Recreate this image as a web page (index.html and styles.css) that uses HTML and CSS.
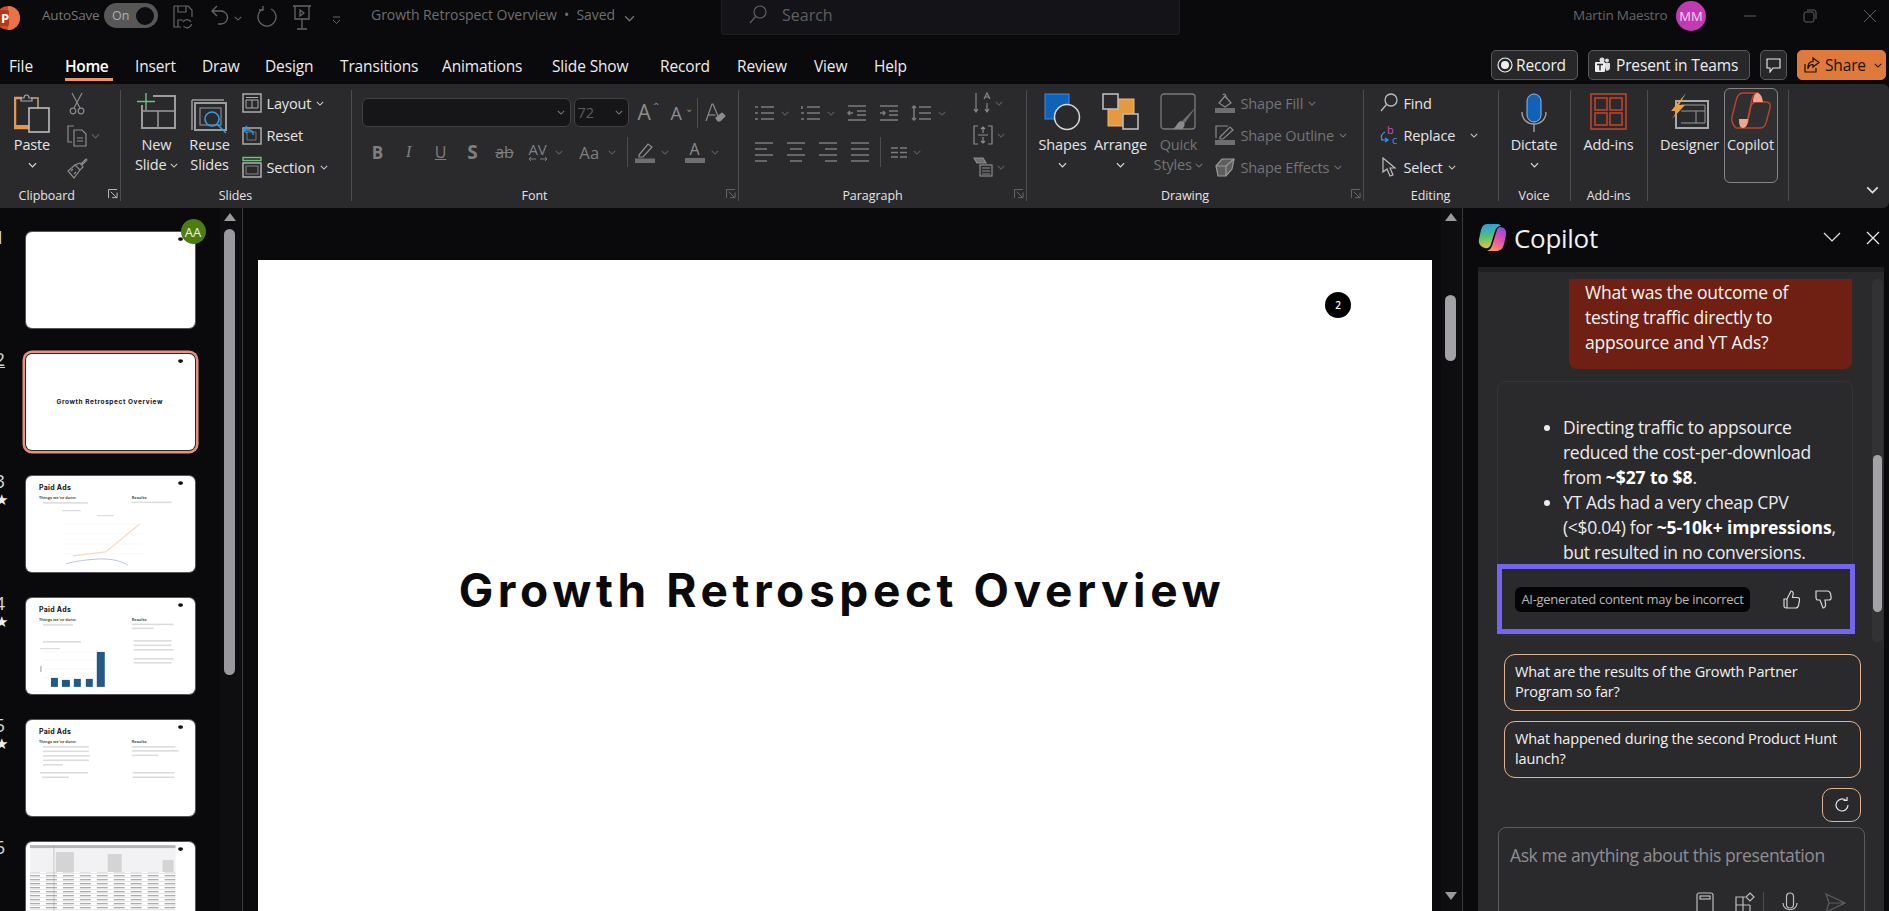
FILE: index.html
```html
<!DOCTYPE html>
<html lang="en">
<head>
<meta charset="utf-8">
<title>Growth Retrospect Overview</title>
<link rel="stylesheet" href="styles.css">
</head>
<body>
<svg class="sprite" aria-hidden="true">
  <symbol id="chev" viewBox="0 0 10 6"><path d="M1 1l4 4 4-4" fill="none" stroke="currentColor" stroke-width="1.3"/></symbol>
  <symbol id="launch" viewBox="0 0 11 11"><path d="M.5 10V.5H10M3 3l6.5 6.5M4.5 9.5h5.500v-5.500" fill="none" stroke="currentColor"/></symbol>
</svg>

<header class="titlebar">
  <svg class="logo-p" width="21" height="30" viewBox="0 0 21 30"><circle cx="8" cy="16" r="12" fill="#d0502a"/><path d="M8 4a12 12 0 0 1 0 24z" fill="#e8734a"/><rect x="-3" y="8" width="12" height="16" rx="1.500" fill="#b7391a"/><text x="1" y="21" class="logo-p-text">P</text></svg>
  <span class="autosave">AutoSave</span>
  <span class="toggle"><span class="toggle-on">On</span><span class="toggle-knob"></span></span>
  <svg class="qat q-save" width="20" height="26" viewBox="0 0 20 26" fill="none" stroke="#666" stroke-width="1.200"><path d="M1 1h14l4 4v7M1 1v21h7M5 1v6h8V1M5 22v-7h5"/><path d="M10 17a4.500 4.500 0 0 1 8 0M18.500 19a4.500 4.500 0 0 1-8 2"/></svg>
  <svg class="qat q-undo" width="19" height="26" viewBox="0 0 19 26" fill="none" stroke="#666" stroke-width="1.300"><path d="M7 2L2 7l5 5M2 7h9a6.500 6.500 0 0 1 0 13H8"/></svg>
  <svg class="qat q-chev" width="8" height="5"><use href="#chev"/></svg>
  <svg class="qat q-redo" width="20" height="26" viewBox="0 0 20 26" fill="none" stroke="#666" stroke-width="1.300"><path d="M6 4a9 9 0 1 0 8 0M6 1v4H2"/></svg>
  <svg class="qat q-present" width="20" height="26" viewBox="0 0 20 26" fill="none" stroke="#666" stroke-width="1.300"><path d="M1 1h18M3 1v13h14V1M10 14v9M5 24h10"/><path d="M8 5l4 3-4 3z"/></svg>
  <svg class="qat q-more" width="9" height="9" viewBox="0 0 9 9" fill="none" stroke="#666"><path d="M1 1h7M1 4l3.500 3.500L8 4"/></svg>
  <span class="doc-title">Growth Retrospect Overview &nbsp;•&nbsp; Saved</span>
  <svg class="doc-chev" width="11" height="7"><use href="#chev"/></svg>
  <div class="search">
    <svg width="18" height="20" viewBox="0 0 18 20" fill="none" stroke="#5f5f5f" stroke-width="1.200"><circle cx="11" cy="7" r="6"/><path d="M6.500 11.500L1 18"/></svg>
    <span>Search</span>
  </div>
  <span class="user-name">Martin Maestro</span>
  <span class="avatar">MM</span>
  <div class="win-controls">
    <svg width="14" height="14" viewBox="0 0 14 14" stroke="#5e5e5e" fill="none"><path d="M1 7h12"/></svg>
    <svg width="14" height="14" viewBox="0 0 14 14" stroke="#5e5e5e" fill="none"><rect x="1" y="3" width="10" height="10" rx="2"/><path d="M4 1h7a2 2 0 0 1 2 2v7"/></svg>
    <svg width="14" height="14" viewBox="0 0 14 14" stroke="#5e5e5e" fill="none"><path d="M1 1l12 12M13 1L1 13"/></svg>
  </div>
</header>

<nav class="tabbar">
  <span class="tab t-file">File</span>
  <span class="tab tab-active t-home">Home</span>
  <span class="tab t-insert">Insert</span>
  <span class="tab t-draw">Draw</span>
  <span class="tab t-design">Design</span>
  <span class="tab t-trans">Transitions</span>
  <span class="tab t-anim">Animations</span>
  <span class="tab t-show">Slide Show</span>
  <span class="tab t-record">Record</span>
  <span class="tab t-review">Review</span>
  <span class="tab t-view">View</span>
  <span class="tab t-help">Help</span>
  <div class="tab-actions">
    <button class="act act-record"><svg width="16" height="16" viewBox="0 0 16 16"><circle cx="8" cy="8" r="7" fill="none" stroke="#eee" stroke-width="1.200"/><circle cx="8" cy="8" r="4" fill="#eee"/></svg>Record</button>
    <button class="act act-teams"><svg width="17" height="17" viewBox="0 0 17 17" fill="#ddd"><circle cx="13" cy="3.500" r="2"/><circle cx="8" cy="3" r="2.500"/><path d="M10 6h6v5a3 3 0 0 1-4 2.500z"/><rect x="1" y="5" width="10" height="10" rx="1" fill="#eee"/><path d="M3 7.500h6M6 7.500v6" stroke="#2a2a2d" stroke-width="1.400"/></svg>Present in Teams</button>
    <button class="act act-comment"><svg width="15" height="15" viewBox="0 0 15 15" fill="none" stroke="#eee" stroke-width="1.100"><path d="M1 1h13v9H7l-3 4v-4H1z"/></svg></button>
    <button class="act act-share"><svg width="16" height="16" viewBox="0 0 16 16" fill="none" stroke="#1c1208" stroke-width="1.200"><path d="M1 7v8h11v-4M9 1l6 4.500L9 10V7.500C6 7.500 4.500 9 4 12c-.5-5 1.500-7.500 5-7.500z"/></svg>Share<svg class="share-chev" width="8" height="5"><use href="#chev"/></svg></button>
  </div>
</nav>

<section class="ribbon">
  <div class="group g-clip">
    <div class="group-body">
      <div class="big w-paste">
        <div class="big-icon"><svg width="36" height="40" viewBox="0 0 36 40" fill="none"><path d="M8 5H1v30h18" stroke="#e09a55" stroke-width="2.500"/><path d="M17 5h7v10" stroke="#c9a27e" stroke-width="1.500"/><path d="M7 8V5h3c0-4 5-4 5 0h3v3z" stroke="#aaa" stroke-width="1.200"/><rect x="2" y="32" width="17" height="3" fill="#e8954a"/><rect x="15" y="15" width="20" height="24" fill="#2a2a2d" stroke="#bdbdbd" stroke-width="1.600"/></svg></div>
        <div class="big-text">Paste</div>
        <svg class="ch-row" width="9" height="6"><use href="#chev"/></svg>
      </div>
      <div class="stack clip-tools">
        <div class="srow"><svg width="16" height="24" viewBox="0 0 16 24" fill="none" stroke="#8d8d8d" stroke-width="1.200"><path d="M3 1l8 15M13 1L5 16"/><circle cx="4" cy="19" r="2.800"/><circle cx="12" cy="19" r="2.800"/></svg></div>
        <div class="srow"><svg width="20" height="22" viewBox="0 0 20 22" fill="none" stroke="#8d8d8d" stroke-width="1.200"><path d="M7 1H1v16h4M7 5h8l4 4v12H7zM10 13h6M10 16h6"/></svg><svg class="dim-ch" width="9" height="6"><use href="#chev"/></svg></div>
        <div class="srow"><svg width="21" height="22" viewBox="0 0 21 22" fill="none" stroke="#8d8d8d" stroke-width="1.200"><path d="M14 7l5-5 1 1-5 5zM13 6l3 4-3 3-5-5zM8 8l-7 6 6 7 6-8"/><path d="M4 14l2-2M7 17l2-2"/></svg></div>
      </div>
    </div>
    <div class="group-label">Clipboard<svg class="launcher lit" width="10" height="10"><use href="#launch"/></svg></div>
  </div>

  <div class="group g-slides">
    <div class="group-body">
      <div class="big w-new">
        <div class="big-icon"><svg width="40" height="36" viewBox="0 0 40 36" fill="none"><path d="M5 12v23h33V3H16" stroke="#9c9c9c" stroke-width="2"/><path d="M5 18h33M21 18v17" stroke="#9c9c9c" stroke-width="1.500"/><path d="M9 0v17M0 8.500h18" stroke="#6cc279" stroke-width="1.400"/></svg></div>
        <div class="big-text">New<br>Slide <svg class="ch-in" width="8" height="5"><use href="#chev"/></svg></div>
      </div>
      <div class="big w-reuse">
        <div class="big-icon"><svg class="ic-low" width="40" height="38" viewBox="0 0 40 38" fill="none"><path d="M2 2h32M2 2v30" stroke="#9c9c9c" stroke-width="1.500"/><path d="M5 5h31v27H5z" stroke="#9c9c9c" stroke-width="2"/><rect x="10" y="10" width="21" height="17" stroke="#8a8a8a" stroke-width="1.200"/><circle cx="22" cy="21" r="7" stroke="#2f9be8" stroke-width="1.600"/><path d="M27 26l9 9" stroke="#2f9be8" stroke-width="1.600"/></svg></div>
        <div class="big-text">Reuse<br>Slides</div>
      </div>
      <div class="stack">
        <div class="srow"><svg class="sicon" width="20" height="20" viewBox="0 0 20 20" fill="none" stroke="#aaa"><rect x="1" y="1" width="18" height="18" stroke-width="1.500"/><path d="M4 4.500h12M4 7h12v8H4zM10 7v8"/></svg><span>Layout</span><svg class="ch-in" width="8" height="5"><use href="#chev"/></svg></div>
        <div class="srow"><svg class="sicon" width="20" height="20" viewBox="0 0 20 20" fill="none"><rect x="1" y="3" width="18" height="16" stroke="#aaa" stroke-width="1.500"/><path d="M5 7h9v8H5z" stroke="#777"/><path d="M5 1L1 5l4 3M1 5h6a4 4 0 0 1 4 5" stroke="#2f9be8" stroke-width="1.300"/></svg><span>Reset</span></div>
        <div class="srow"><svg class="sicon" width="20" height="22" viewBox="0 0 20 22" fill="none"><path d="M1 1.500h18v3H1z" stroke="#6cc279" stroke-width="1.400"/><rect x="1" y="7" width="18" height="14" stroke="#aaa" stroke-width="1.600"/><rect x="4" y="10" width="12" height="8" stroke="#888"/></svg><span>Section</span><svg class="ch-in" width="8" height="5"><use href="#chev"/></svg></div>
      </div>
    </div>
    <div class="group-label">Slides</div>
  </div>

  <div class="group g-font">
    <div class="group-body font-body">
      <div class="font-row">
        <div class="combo c-name"><svg width="8" height="5"><use href="#chev"/></svg></div>
        <div class="combo c-size"><span>72</span><svg width="8" height="5"><use href="#chev"/></svg></div>
        <span class="glyph g-grow">A<sup>⌃</sup></span>
        <span class="glyph g-shrink">A<sup>⌄</sup></span>
        <i class="vsep vs-clear"></i>
        <svg class="i-clear" width="21" height="20" viewBox="0 0 21 20" fill="none" stroke="#8d8d8d" stroke-width="1.200"><path d="M1 18L7 1h1l5 12"/><path d="M3.500 12h7"/><path d="M11 15l6-5 3 3-5 5h-2z" fill="#8d8d8d"/></svg>
      </div>
      <div class="font-row row-fmt">
        <b class="fmt f-b">B</b><i class="fmt f-i">I</i><u class="fmt f-u">U</u><b class="fmt f-s">S</b><s class="fmt f-ab">ab</s>
        <span class="fmt f-av">AV<svg width="20" height="6" viewBox="0 0 20 6" fill="none" stroke="#7a7a7a"><path d="M1 3h7M3 1L1 3l2 2M12 3h7M17 1l2 2-2 2"/></svg></span>
        <svg class="fch" width="8" height="5"><use href="#chev"/></svg>
        <span class="fmt f-aa">Aa</span>
        <svg class="fch" width="8" height="5"><use href="#chev"/></svg>
        <i class="vsep vs-fmt"></i>
        <svg class="i-hl" width="20" height="21" viewBox="0 0 20 21" fill="none" stroke="#8d8d8d" stroke-width="1.200"><path d="M4 13l9-11 4 3-9 10H4z"/><rect y="16.500" width="20" height="4.500" fill="#6f6f6f" stroke="none"/></svg>
        <svg class="fch" width="8" height="5"><use href="#chev"/></svg>
        <span class="i-fc"><span>A</span></span>
        <svg class="fch" width="8" height="5"><use href="#chev"/></svg>
      </div>
    </div>
    <div class="group-label">Font<svg class="launcher" width="10" height="10"><use href="#launch"/></svg></div>
  </div>

  <div class="group g-para">
    <div class="group-body para-body">
      <div class="para-left">
        <div class="para-row">
          <svg class="pi" width="19" height="16" viewBox="0 0 19 16" stroke="#7c7c7c" stroke-width="1.600"><path d="M0 2h3M0 8h3M0 14h3M6 2h13M6 8h13M6 14h13"/></svg>
          <svg class="pch" width="8" height="5"><use href="#chev"/></svg>
          <svg class="pi" width="19" height="16" viewBox="0 0 19 16" stroke="#7c7c7c" stroke-width="1.600"><path d="M1 1v3M0 8h3M0 14h3M6 2h13M6 8h13M6 14h13"/></svg>
          <svg class="pch" width="8" height="5"><use href="#chev"/></svg>
          <svg class="pi pi-a" width="19" height="16" viewBox="0 0 19 16" fill="none" stroke="#7c7c7c" stroke-width="1.500"><path d="M1 1h18M10 6h9M10 10h9M1 15h18M6 8H1M3 6L1 8l2 2"/></svg>
          <svg class="pi pi-b" width="19" height="16" viewBox="0 0 19 16" fill="none" stroke="#7c7c7c" stroke-width="1.500"><path d="M1 1h18M10 6h9M10 10h9M1 15h18M1 8h5M4 6l2 2-2 2"/></svg>
          <svg class="pi pi-b" width="20" height="16" viewBox="0 0 20 16" fill="none" stroke="#7c7c7c" stroke-width="1.500"><path d="M8 2h12M8 8h12M8 14h12M3 1v14M1 3l2-2 2 2M1 13l2 2 2-2"/></svg>
          <svg class="pch" width="8" height="5"><use href="#chev"/></svg>
        </div>
        <div class="para-row para-row2">
          <svg class="pa" width="18" height="22" viewBox="0 0 18 22" stroke="#7c7c7c" stroke-width="1.600"><path d="M0 2h18M0 8h12M0 14h18M0 20h12"/></svg>
          <svg class="pa" width="18" height="22" viewBox="0 0 18 22" stroke="#7c7c7c" stroke-width="1.600"><path d="M0 2h18M3 8h12M0 14h18M3 20h12"/></svg>
          <svg class="pa" width="18" height="22" viewBox="0 0 18 22" stroke="#7c7c7c" stroke-width="1.600"><path d="M0 2h18M6 8h12M0 14h18M6 20h12"/></svg>
          <svg class="pa" width="18" height="22" viewBox="0 0 18 22" stroke="#7c7c7c" stroke-width="1.600"><path d="M0 2h18M0 8h18M0 14h18M0 20h18"/></svg>
          <i class="vsep vs-col"></i>
          <svg width="16" height="11" viewBox="0 0 16 11" stroke="#7c7c7c" stroke-width="1.300"><path d="M0 1h7M9 1h7M0 5.500h7M9 5.500h7M0 10h7M9 10h7"/></svg>
          <svg class="pch" width="8" height="5"><use href="#chev"/></svg>
        </div>
      </div>
      <div class="stack para-right">
        <div class="srow"><svg width="18" height="22" viewBox="0 0 18 22" fill="none" stroke="#8d8d8d" stroke-width="1.100"><path d="M3 1v19M1 17l2 3 2-3M11 7l3-6 3 6M12 5h4M14 11v9M12 17l2 3 2-3"/></svg><svg class="pch" width="8" height="5"><use href="#chev"/></svg></div>
        <div class="srow"><svg width="20" height="20" viewBox="0 0 20 20" fill="none" stroke="#8d8d8d" stroke-width="1.200"><path d="M5 1H1v18h4M15 1h4v18h-4M10 2v6M8 4l2-2 2 2M10 12v6M8 16l2 2 2-2M5 10h10"/></svg><svg class="pch" width="8" height="5"><use href="#chev"/></svg></div>
        <div class="srow"><svg width="20" height="20" viewBox="0 0 20 20" fill="none" stroke="#8d8d8d" stroke-width="1.200"><path d="M1 1h9l3 5H4z" fill="#6f6f6f"/><rect x="7" y="8" width="12" height="11"/><path d="M9 11h8M9 14h8M9 17h8"/></svg><svg class="pch" width="8" height="5"><use href="#chev"/></svg></div>
      </div>
    </div>
    <div class="group-label">Paragraph<svg class="launcher" width="10" height="10"><use href="#launch"/></svg></div>
  </div>

  <div class="group g-draw">
    <div class="group-body">
      <div class="big w-shapes">
        <div class="big-icon"><svg width="37" height="38" viewBox="0 0 37 38" fill="none"><rect x="1" y="1" width="24" height="25" fill="#0f62b8" stroke="#3d8be0"/><circle cx="23" cy="24" r="12.500" fill="#2a2a2d" stroke="#d8d8d8" stroke-width="1.500"/></svg></div>
        <div class="big-text">Shapes</div>
        <svg class="ch-row" width="9" height="6"><use href="#chev"/></svg>
      </div>
      <div class="big w-arrange">
        <div class="big-icon"><svg width="37" height="38" viewBox="0 0 37 38" fill="none"><rect x="6" y="6" width="26" height="27" fill="#e59a3f" stroke="#f0b878"/><rect x="1" y="1" width="15" height="15" fill="#2a2a2d" stroke="#bbb" stroke-width="1.600"/><rect x="21" y="21" width="15" height="15" fill="#2a2a2d" stroke="#bbb" stroke-width="1.600"/></svg></div>
        <div class="big-text">Arrange</div>
        <svg class="ch-row" width="9" height="6"><use href="#chev"/></svg>
      </div>
      <div class="big w-quick dim">
        <div class="big-icon"><svg width="38" height="38" viewBox="0 0 38 38" fill="none"><rect x="1" y="1" width="34" height="35" rx="3" stroke="#7a7a7a" stroke-width="1.300"/><path d="M36 14L25 30l-3-2z" fill="#6e6e6e"/><path d="M21 28c-4 1-4 5-8 8h9c3-2 3-5 2-7z" fill="#8a8a8a"/></svg></div>
        <div class="big-text">Quick<br>Styles <svg class="ch-in" width="8" height="5"><use href="#chev"/></svg></div>
      </div>
      <div class="stack dim shape-opts">
        <div class="srow"><svg class="sicon" width="20" height="20" viewBox="0 0 20 20" fill="none" stroke="#8a8a8a" stroke-width="1.200"><path d="M4 10l6-7 6 7-6 4z"/><path d="M8 2c1-2 3-1 3 3"/><rect y="15" width="20" height="5" fill="#6f6f6f" stroke="none"/></svg><span>Shape Fill</span><svg class="ch-in" width="8" height="5"><use href="#chev"/></svg></div>
        <div class="srow"><svg class="sicon" width="20" height="20" viewBox="0 0 20 20" fill="none" stroke="#8a8a8a" stroke-width="1.200"><path d="M1 13V1h12M5 12L15 2l3 3L8 14H5z"/><rect y="15" width="20" height="5" fill="#6f6f6f" stroke="none"/></svg><span>Shape Outline</span><svg class="ch-in" width="8" height="5"><use href="#chev"/></svg></div>
        <div class="srow"><svg class="sicon" width="20" height="20" viewBox="0 0 20 20" fill="#5e5e5e" stroke="#9a9a9a" stroke-width="1.200"><path d="M1 9l6-7h12l-2 10-6 7H3z"/><path d="M1 9h10l8-7M11 9v10" fill="none"/></svg><span>Shape Effects</span><svg class="ch-in" width="8" height="5"><use href="#chev"/></svg></div>
      </div>
    </div>
    <div class="group-label">Drawing<svg class="launcher" width="10" height="10"><use href="#launch"/></svg></div>
  </div>

  <div class="group g-edit">
    <div class="group-body">
      <div class="stack edit-stack">
        <div class="srow"><svg class="sicon" width="18" height="20" viewBox="0 0 18 20" fill="none" stroke="#bdbdbd" stroke-width="1.300"><circle cx="11" cy="7" r="6"/><path d="M6.500 11.500L1 18"/></svg><span>Find</span></div>
        <div class="srow"><svg class="sicon" width="18" height="20" viewBox="0 0 18 20"><text x="7" y="9" class="rep-b">b</text><text x="12" y="19" class="rep-c">c</text><path d="M5 7C1 9 0 13 3 15M8 15H1M5 13l3 2-3 2" fill="none" stroke="#2f9be8" stroke-width="1.200"/></svg><span>Replace</span><svg class="ch-rep" width="8" height="5"><use href="#chev"/></svg></div>
        <div class="srow"><svg class="sicon" width="18" height="20" viewBox="0 0 18 20" fill="none" stroke="#bdbdbd" stroke-width="1.200"><path d="M3 1v14l4-3 3 7 3-1-3-7h5z"/></svg><span>Select</span><svg class="ch-in" width="8" height="5"><use href="#chev"/></svg></div>
      </div>
    </div>
    <div class="group-label">Editing</div>
  </div>

  <div class="group g-voice">
    <div class="group-body">
      <div class="big w-full">
        <div class="big-icon"><svg width="26" height="40" viewBox="0 0 26 40" fill="none"><rect x="6" y="1" width="14" height="28" rx="7" fill="#0f62b8" stroke="#9ab8d8"/><path d="M1 19c0 16 24 16 24 0M13 31v8" stroke="#a0a0a0" stroke-width="1.400"/></svg></div>
        <div class="big-text">Dictate</div>
        <svg class="ch-row" width="9" height="6"><use href="#chev"/></svg>
      </div>
    </div>
    <div class="group-label">Voice</div>
  </div>

  <div class="group g-addins">
    <div class="group-body">
      <div class="big w-full">
        <div class="big-icon"><svg width="37" height="37" viewBox="0 0 37 37" fill="none" stroke="#b8452c" stroke-width="1.600"><rect x="1" y="1" width="35" height="35"/><rect x="5" y="5" width="12" height="12"/><rect x="20" y="5" width="12" height="12"/><rect x="5" y="20" width="12" height="12"/><rect x="20" y="20" width="12" height="12"/></svg></div>
        <div class="big-text">Add-ins</div>
      </div>
    </div>
    <div class="group-label">Add-ins</div>
  </div>

  <div class="group g-ai">
    <div class="group-body ai-body">
      <div class="big w-designer">
        <div class="big-icon"><svg width="39" height="36" viewBox="0 0 39 36" fill="none"><rect x="6" y="8" width="32" height="27" stroke="#a9a9a9" stroke-width="2"/><path d="M11 12h24v18H11M11 18h24M26 18v12" stroke="#9a9a9a"/><path d="M16 0L1 18h6L2 26 15 12H9z" fill="#eda13e"/></svg></div>
        <div class="big-text">Designer</div>
      </div>
      <div class="big w-copilot">
        <div class="big-icon"><svg width="40" height="37" viewBox="0 0 40 37" fill="none"><path d="M12 1h16c-3 0-6 2-7 6l-5 23c-1 4-3 6-6 6H5C2 33 0 30 1 25L5 9c1-5 4-8 7-8z" stroke="#b8452c" stroke-width="1.400"/><path d="M20 14c1-3 3-4 6-4h9c3 0 5 2 4 6l-4 15c-1 3-3 5-6 5H11c3-1 5-3 6-7z" stroke="#b8452c" stroke-width="1.400"/><path d="M26 1c3 0 5 3 6 9H22c0-5 2-9 4-9zM12 36c-3 0-4-3-4-9h9c0 5-2 9-5 9z" fill="#f0a58e"/></svg></div>
        <div class="big-text">Copilot</div>
      </div>
    </div>
  </div>
  <svg class="collapse" width="13" height="8"><use href="#chev"/></svg>
</section>

<main class="workspace">
  <aside class="thumbs">
    <div class="thumb-row">
      <div class="num">1</div>
      <div class="thumb"><svg class="mini" viewBox="0 0 169 96"><ellipse cx="155" cy="7" rx="2.500" ry="1.800"/></svg><span class="presence">AA</span></div>
    </div>
    <div class="thumb-row">
      <div class="num num-cur">2</div>
      <div class="thumb thumb-cur"><svg class="mini" viewBox="0 0 169 96"><ellipse cx="155" cy="7" rx="2.500" ry="1.800"/><text x="84" y="50" text-anchor="middle" class="mini-cover">Growth Retrospect Overview</text></svg></div>
    </div>
    <div class="thumb-row">
      <div class="num">3<span class="star">★</span></div>
      <div class="thumb"><svg class="mini" viewBox="0 0 169 96">
        <ellipse cx="155" cy="7" rx="2.500" ry="1.800"/><text x="13" y="14" class="mini-h">Paid Ads</text>
        <text x="13" y="23" class="mini-b">Things we've done:</text><text x="106" y="23" class="mini-b">Results:</text>
        <rect x="17" y="26" width="45" height="1.600" class="bar"/><rect x="106" y="25.500" width="40" height="1.600" class="bar"/>
        <rect x="36" y="34" width="19" height="1.200" class="bar"/><rect x="71" y="39" width="17" height="1.200" class="bar"/>
        <path d="M38 48h80M38 58h80M38 68h80M38 78h80" stroke="#f1f1f1" stroke-width=".6"/>
        <path d="M47 80l33-4 34-28" fill="none" stroke="#f6dcc0" stroke-width="1.200"/>
        <path d="M40 88c10-3 20-4 34-5 14 0 20 2 28 6" fill="none" stroke="#b8c4d8" stroke-width="1"/>
      </svg></div>
    </div>
    <div class="thumb-row">
      <div class="num">4<span class="star">★</span></div>
      <div class="thumb"><svg class="mini" viewBox="0 0 169 96">
        <ellipse cx="155" cy="7" rx="2.500" ry="1.800"/><text x="13" y="14" class="mini-h">Paid Ads</text>
        <text x="13" y="23" class="mini-b">Things we've done:</text><text x="106" y="23" class="mini-b">Results:</text>
        <rect x="17" y="26" width="30" height="1.600" class="bar"/><rect x="17" y="43" width="38" height="1.600" class="bar"/>
        <rect x="106" y="25.500" width="42" height="1.600" class="bar"/><rect x="106" y="29.500" width="22" height="1.600" class="bar"/>
        <rect x="108" y="42" width="38" height="1.600" class="bar"/><rect x="108" y="46.500" width="38" height="1.600" class="bar"/><rect x="108" y="51" width="40" height="1.600" class="bar"/>
        <rect x="108" y="60" width="40" height="1.600" class="bar"/><rect x="108" y="64" width="38" height="1.600" class="bar"/>
        <rect x="14" y="50" width="20" height="1.200" class="bar"/>
        <path d="M18 54h62M18 62h62M18 71h62M18 80h62" stroke="#eee" stroke-width=".6"/><path d="M15 68v6" stroke="#999"/>
        <rect x="25" y="80" width="7" height="9" class="cbar"/><rect x="36" y="82" width="8" height="7" class="cbar"/><rect x="48" y="81" width="7" height="8" class="cbar"/><rect x="60" y="81" width="7" height="8" class="cbar"/><rect x="71" y="54" width="8" height="35" class="cbar"/>
      </svg></div>
    </div>
    <div class="thumb-row">
      <div class="num">5<span class="star">★</span></div>
      <div class="thumb"><svg class="mini" viewBox="0 0 169 96">
        <ellipse cx="155" cy="7" rx="2.500" ry="1.800"/><text x="13" y="14" class="mini-h">Paid Ads</text>
        <text x="13" y="23" class="mini-b">Things we've done:</text><text x="106" y="23" class="mini-b">Results:</text>
        <rect x="17" y="26" width="46" height="1.600" class="bar"/><rect x="17" y="30.500" width="46" height="1.600" class="bar"/><rect x="17" y="35" width="47" height="1.600" class="bar"/><rect x="17" y="39.500" width="46" height="1.600" class="bar"/><rect x="17" y="44" width="20" height="1.600" class="bar"/>
        <rect x="14" y="52" width="48" height="1.600" class="bar"/><rect x="16" y="56.500" width="27" height="1.600" class="bar"/>
        <rect x="106" y="26" width="44" height="1.600" class="bar"/><rect x="106" y="30" width="47" height="1.600" class="bar"/><rect x="106" y="34.500" width="27" height="1.600" class="bar"/>
        <rect x="107" y="52" width="42" height="1.600" class="bar"/><rect x="107" y="56.500" width="42" height="1.600" class="bar"/>
      </svg></div>
    </div>
    <div class="thumb-row">
      <div class="num">6</div>
      <div class="thumb"><svg class="mini" viewBox="0 0 169 96">
        <defs><pattern id="tbl" width="17" height="4" patternUnits="userSpaceOnUse"><rect width="17" height="4" fill="#fff"/><rect x="3" y="1" width="11" height="1.300" fill="#a9a9ad"/><rect y="3.600" width="17" height=".4" fill="#bbb"/></pattern></defs>
        <rect x="4" y="3" width="146" height="3.500" fill="#b4b4b6"/><rect x="4" y="6" width="146" height="26" fill="#f2f1f3"/>
        <rect x="30" y="10" width="18" height="20" fill="#bbb" opacity=".55"/><rect x="82" y="12" width="14" height="18" fill="#bbb" opacity=".55"/><rect x="137" y="18" width="11" height="12" fill="#bbb" opacity=".55"/>
        <rect x="4" y="30" width="146" height="66" fill="url(#tbl)"/><path d="M28 3v93" stroke="#999" stroke-width=".5"/>
        <ellipse cx="155" cy="7" rx="2.500" ry="1.800"/>
      </svg></div>
    </div>
  </aside>

  <div class="vscroll v-left">
    <i class="arrow-up"></i>
    <i class="vthumb vt-left"></i>
  </div>

  <div class="canvas">
    <div class="slide">
      <span class="slide-badge">2</span>
      <h1 class="slide-title">Growth Retrospect Overview</h1>
    </div>
  </div>

  <div class="vscroll v-right">
    <i class="arrow-up"></i>
    <i class="vthumb vt-right"></i>
    <i class="arrow-down"></i>
  </div>

  <aside class="copilot">
    <div class="cp-head">
      <svg class="cp-logo" width="29" height="29" viewBox="0 0 29 29">
        <defs>
          <linearGradient id="cpa" x1="0.300" y1="0" x2="0.400" y2="1"><stop offset="0" stop-color="#2f9ce8"/><stop offset=".5" stop-color="#4fc07a"/><stop offset="1" stop-color="#e9c33c"/></linearGradient>
          <linearGradient id="cpb" x1="0.800" y1="0" x2="0.300" y2="1"><stop offset="0" stop-color="#8a4ce0"/><stop offset=".5" stop-color="#e84fb0"/><stop offset="1" stop-color="#f59a4a"/></linearGradient>
        </defs>
        <path d="M9 1h10c2 0 3 .5 4 2-3 0-5 2-6 5l-4 13c-1 3-3 5-6 4-4-1-7-4-6-9L3 7c1-4 3-6 6-6z" fill="url(#cpa)"/>
        <path d="M22 4c4 0 7 3 6 8l-2 9c-1 5-4 7-8 7H9c3-1 4-3 5-5l4-13c1-4 2-6 4-6z" fill="url(#cpb)"/>
      </svg>
      <span class="cp-title">Copilot</span>
      <svg class="cp-min" width="18" height="11" viewBox="0 0 18 11" fill="none" stroke="#e8e8e8" stroke-width="1.200"><path d="M1 1l8 8 8-8"/></svg>
      <svg class="cp-close" width="14" height="14" viewBox="0 0 14 14" stroke="#e8e8e8" stroke-width="1.300"><path d="M1 1l12 12M13 1L1 13"/></svg>
    </div>
    <div class="cp-band"></div>
    <div class="cp-body">
      <div class="bubble">What was the outcome of<br>testing traffic directly to<br>appsource and YT Ads?</div>
      <div class="answer">
        <ul class="answer-list">
          <li>Directing traffic to appsource<br>reduced the cost-per-download<br>from <b>~$27 to $8</b>.</li>
          <li>YT Ads had a very cheap CPV<br>(&lt;$0.04) for <b>~5-10k+ impressions</b>,<br>but resulted in no conversions.</li>
        </ul>
        <div class="answer-foot">
          <span class="ai-pill">AI-generated content may be incorrect</span>
          <svg class="thumb-ic" width="17" height="19" viewBox="0 0 17 19" fill="none" stroke="#d8d8d8" stroke-width="1.200"><path d="M1 9h3v9H3a2 2 0 0 1-2-2zM4 9l4-8c2 0 2.500 2 2 4l-.5 2.500H14c2 0 3 1 2.500 3l-1 5c-.5 2-1.500 2.500-3 2.500H4"/></svg>
          <svg class="thumb-ic" width="17" height="19" viewBox="0 0 17 19" fill="none" stroke="#d8d8d8" stroke-width="1.200"><path d="M1 1h11c2 0 3 1 3.500 2.500L16 7c.5 2-.5 3-2.500 3H10l.5 4c.5 2-1 4-2.500 4L5 10H3c-1 0-2-1-2-2.500z"/></svg>
        </div>
      </div>
      <div class="suggest">What are the results of the Growth Partner<br>Program so far?</div>
      <div class="suggest">What happened during the second Product Hunt<br>launch?</div>
      <div class="refresh-row"><button class="refresh"><svg width="16" height="16" viewBox="0 0 16 16" fill="none" stroke="#e8e8e8" stroke-width="1.200"><path d="M14 8a6 6 0 1 1-2-4.500M9.500 3.500h3.500V0"/></svg></button></div>
      <div class="composer">
        <div class="composer-text">Ask me anything about this presentation</div>
        <div class="composer-tools">
          <svg width="18" height="22" viewBox="0 0 18 22" fill="none" stroke="#bdbdbd" stroke-width="1.200"><rect x="1" y="1" width="16" height="20" rx="2"/><rect x="4" y="4" width="10" height="3"/></svg>
          <svg class="ct-b" width="20" height="22" viewBox="0 0 20 22" fill="none" stroke="#bdbdbd" stroke-width="1.200"><path d="M10 5H1v16h14v-8M1 13h14M8 5v16"/><path d="M15 1l4 4-4 4-4-4z"/></svg>
          <i class="ct-sep"></i>
          <svg class="ct-c" width="16" height="22" viewBox="0 0 16 22" fill="none" stroke="#bdbdbd" stroke-width="1.200"><rect x="4.500" y="1" width="7" height="15" rx="3.500"/><path d="M1 11c0 9 14 9 14 0"/></svg>
          <svg class="ct-d" width="21" height="22" viewBox="0 0 21 22" fill="none" stroke="#5e5e5e" stroke-width="1.200"><path d="M1 2l19 9-19 9 3-9zM4 11h16"/></svg>
        </div>
      </div>
    </div>
    <div class="cp-track"><i class="cp-thumb"></i></div>
  </aside>
</main>
</body>
</html>
```

FILE: styles.css
```css
* { box-sizing: border-box; }
html, body { margin: 0; padding: 0; }
body {
  width: 1889px; height: 911px; overflow: hidden;
  background: #0a090c; color: #e8e8e8;
  font-family: "Open Sans", "Noto Sans", sans-serif;
  display: flex; flex-direction: column;
}
.sprite { display: none; }
svg { flex: none; display: block; color: #b5b5b5; }
i { display: block; flex: none; }

/* title bar */
.titlebar { height: 50px; flex: none; display: flex; align-items: flex-start; font-size: 14px; color: #6c6c6c; }
.titlebar > * { margin-top: 2px; }
.logo-p-text { font: 700 13px "Open Sans", sans-serif; fill: #fff; }
.autosave { margin: 6px 0 0 21px; font-size: 13.500px; letter-spacing: -.2px; color: #777; width: 62px; }
.toggle { width: 54px; height: 25px; margin: 3px 0 0 0; border-radius: 13px; background: #575757; display: flex; align-items: center; padding: 0 4px 0 8px; justify-content: space-between; }
.toggle-on { font-size: 12.500px; color: #b0b0b0; }
.toggle-knob { width: 18px; height: 18px; border-radius: 50%; background: #0d0d0f; }
.qat { color: #666; }
.q-save { margin: 5px 0 0 15px; }
.q-undo { margin: 4px 0 0 17px; }
.q-chev { margin: 16px 0 0 5px; }
.q-redo { margin: 5px 0 0 15px; }
.q-present { margin: 5px 0 0 15px; }
.q-more { margin: 16px 0 0 20px; }
.doc-title { margin: 5px 0 0 30px; width: 250px; font-size: 14px; letter-spacing: -.05px; color: #6f6f6f; white-space: nowrap; }
.doc-chev { margin: 15px 0 0 3px; color: #6f6f6f; }
.search { margin: 0 0 0 86px; width: 459px; height: 35px; background: #141317; border: 1px solid #1e1d21; border-top: 0; border-radius: 0 0 4px 4px; display: flex; align-items: center; gap: 15px; padding: 0 0 5px 27px; font-size: 16px; color: #5f5f5f; }
.user-name { margin: 6px 0 0 393px; width: 88px; font-size: 13.500px; letter-spacing: -.2px; color: #666; white-space: nowrap; }
.avatar { margin: 1px 0 0 15px; width: 30px; height: 30px; border-radius: 50%; background: #c239b3; color: #f3d6f0; font-size: 13px; display: flex; align-items: center; justify-content: center; }
.win-controls { margin: 9px 0 0 0; display: flex; gap: 46px; padding-left: 37px; }

/* tabs */
.tabbar { height: 34px; flex: none; display: flex; align-items: flex-start; font-size: 15.500px; color: #ededed; letter-spacing: -.15px; }
.tab { display: block; height: 31px; line-height: 32px; white-space: nowrap; }
.t-file { margin-left: 9px; width: 56px; }
.t-home { width: 48px; margin-right: 22px; }
.t-insert { width: 67px; }
.t-draw { width: 63px; }
.t-design { width: 75px; }
.t-trans { width: 102px; }
.t-anim { width: 110px; }
.t-show { width: 108px; }
.t-record { width: 77px; }
.t-review { width: 77px; }
.t-view { width: 60px; }
.t-help { width: 40px; }
.tab-active { font-weight: 600; color: #fff; border-bottom: 3px solid #f0955f; letter-spacing: -.35px; }
.tab-actions { display: flex; margin-left: 577px; }
.act { height: 30px; border: 1px solid #5a5a5c; border-radius: 5px; background: #27272a; color: #eee; font: 15.500px "Open Sans", sans-serif; letter-spacing: -.15px; display: flex; align-items: center; gap: 5px; padding: 0; white-space: nowrap; }
.act-record { width: 87px; padding-left: 5px; margin-right: 10px; gap: 3px; }
.act-teams { width: 162px; padding-left: 5px; margin-right: 10px; }
.act-comment { width: 27px; justify-content: center; margin-right: 10px; }
.act-share { width: 89px; padding-left: 6px; background: #df7a3b; border-color: #df7a3b; color: #1c1208; }
.share-chev { color: #1c1208; margin-left: 3px; }

/* ribbon */
.ribbon { height: 124px; flex: none; background: #2a2a2d; border-radius: 0 6px 6px 0; padding-top: 6px; display: flex; position: relative; font-size: 14.500px; letter-spacing: -.15px; color: #e4e4e4; }
.group { height: 111px; flex: none; border-right: 1px solid #4d4d50; position: relative; }
.group-body { height: 96px; display: flex; align-items: flex-start; }
.group-label { position: relative; height: 17px; margin-top: 1px; font-size: 12.500px; line-height: 17px; text-align: center; color: #e4e4e4; letter-spacing: -.05px; }
.launcher { position: absolute; right: 2px; top: 2px; color: #6d6d6d; }
.launcher.lit { color: #c9c9c9; }
.g-clip { width: 120.500px; }
.g-clip .group-label { padding-right: 26px; }
.g-slides { width: 231px; }
.g-font { width: 387px; }
.g-font .group-label { padding-right: 20px; }
.g-para { width: 288px; }
.g-para .group-label { padding-right: 19px; }
.g-draw { width: 337px; }
.g-draw .group-label { padding-right: 19px; }
.g-edit { width: 135px; }
.g-voice { width: 72px; }
.g-addins { width: 77px; }
.g-ai { width: 141px; }
.big { text-align: center; line-height: 20px; display: flex; flex-direction: column; align-items: center; flex: none; white-space: nowrap; }
.big-icon { height: 45px; padding-top: 3px; display: flex; justify-content: center; }
.big-text { width: 100%; }
.ic-low { margin-top: 5px; }
.ch-row { margin-top: 7px; color: #ddd; }
.ch-in { display: inline-block; vertical-align: 2px; color: #ccc; }
.stack { display: flex; flex-direction: column; gap: 4px; flex: none; margin-top: -1px; }
.srow { height: 28px; display: flex; align-items: center; white-space: nowrap; }
.sicon { margin-right: 5px; }
.srow .ch-in { margin-left: 5px; vertical-align: 0; }
.dim, .dim .ch-in { color: #747474; }
.w-paste { width: 50px; margin-left: 7px; }
.clip-tools { margin-left: 9px; margin-top: 0; }
.clip-tools .srow { padding-left: 1px; }
.clip-tools .srow:nth-child(1) { padding-left: 3px; }
.dim-ch { margin-left: 4px; color: #5f5f5f; }
.w-new { width: 60px; margin-left: 6px; }
.w-reuse { width: 60px; margin-left: -7px; margin-right: 3px; }
.g-slides .stack { margin-left: -1px; }

/* font group */
.font-body { flex-direction: column; padding: 8px 0 0 10px; }
.font-row { display: flex; align-items: center; height: 29px; }
.row-fmt { margin-top: 10px; height: 30px; }
.combo { height: 29px; background: #161518; border: 1px solid #424245; border-radius: 6px; display: flex; align-items: center; justify-content: flex-end; padding-right: 5px; color: #7a7a7a; }
.c-name { width: 209px; }
.c-size { width: 55px; margin-left: 3px; justify-content: space-between; padding-left: 3px; }
.c-size span { font-size: 14.500px; color: #5c5c5c; }
.c-size svg, .c-name svg { color: #7a7a7a; }
.glyph { font-size: 21px; color: #8d8d8d; line-height: 1; position: relative; }
.glyph sup { font-size: 10px; position: absolute; left: 14px; top: -1px; }
.g-grow { margin-left: 9px; width: 33px; }
.g-shrink { width: 26px; font-size: 18px; }
.vs-clear { width: 1px; height: 30px; background: #4d4d50; margin-left: 0; }
.i-clear { margin-left: 7px; }
.fmt { font-size: 16px; color: #7f7f7f; text-align: center; font-style: normal; }
.f-b { width: 16px; margin-left: 8px; font-size: 17px; }
.f-i { width: 16px; margin-left: 15px; font-style: italic; font-family: "Liberation Serif", serif; font-size: 17px; }
.f-u { width: 16px; margin-left: 16px; }
.f-s { width: 16px; margin-left: 16px; font-size: 19px; }
.f-ab { width: 20px; margin-left: 14px; }
.f-av { width: 22px; margin-left: 12px; font-size: 15px; line-height: 13px; display: flex; flex-direction: column; align-items: center; }
.fch { color: #5f5f5f; margin-left: 6px; }
.f-aa { width: 24px; margin-left: 15px; font-size: 16.500px; letter-spacing: .5px; }
.vs-fmt { width: 1px; height: 30px; background: #4d4d50; margin-left: 11px; }
.i-hl { margin-left: 7px; }
.i-hl + .fch { margin-left: 6px; }
.i-fc { width: 20px; margin-left: 16px; height: 21px; border-bottom: 5px solid #6f6f6f; font-size: 16px; color: #8d8d8d; text-align: center; line-height: 15px; display: block; }

/* paragraph group */
.para-body { padding-left: 16px; }
.para-left { width: 205px; padding-top: 15px; }
.para-row { display: flex; align-items: center; height: 16px; }
.pch { color: #5f5f5f; margin: 0 0 0 7px; }
.pch + .pi { margin-left: 12px; }
.pi-a { margin-left: 9px; }
.pi-b { margin-left: 13px; }
.para-row2 { margin-top: 20px; height: 22px; gap: 14px; }
.para-row2 .pch { margin-left: -8px; }
.vs-col { width: 1px; height: 30px; background: #4d4d50; margin: 0 -4px 0 -3px; }
.para-right { margin-left: 13px; }
.para-right .pch { margin-left: 4px; }

/* drawing */
.w-shapes { width: 58px; margin-left: 7px; }
.w-arrange { width: 58px; }
.w-quick { width: 58px; }
.shape-opts { margin-left: 7px; }
.shape-opts .sicon { margin-right: 6px; }

/* editing */
.edit-stack { margin-left: 16px; }
.edit-stack .sicon { margin-right: 6px; }
.rep-b { font: 11px "Open Sans", sans-serif; fill: #c44fc0; }
.rep-c { font: 11px "Open Sans", sans-serif; fill: #2f9be8; }
.ch-rep { margin-left: 15px; color: #ccc; }
.w-full { width: 100%; }
.ai-body { padding-left: 12px; }
.w-designer { width: 60px; }
.w-copilot { width: 54px; margin: -2px 0 0 4px; height: 95px; border: 1px solid #858588; border-radius: 6px; background: #2f2f32; }
.w-copilot .big-icon { padding-top: 3px; height: 46px; }
.collapse { position: absolute; right: 10px; top: 102px; color: #e0e0e0; }

/* workspace */
.workspace { flex: 1; min-height: 0; display: flex; overflow: hidden; }
.thumbs { width: 220px; flex: none; padding-top: 24px; display: flex; flex-direction: column; gap: 26px; overflow: hidden; }
.thumb-row { display: flex; height: 96px; flex: none; }
.num { width: 26px; height: 50px; flex: none; margin-top: -5px; text-align: right; padding-right: 21px; font-size: 19px; line-height: 20px; color: #d5d5d5; white-space: nowrap; display: flex; flex-direction: column; align-items: flex-end; }
.num-cur { text-decoration: underline; text-underline-offset: 1px; }
.star { font-size: 15px; line-height: 16px; margin-right: -3px; color: #eee; }
.thumb { width: 168.500px; height: 96px; background: #fff; border-radius: 6px; position: relative; box-shadow: 0 0 0 1px #56565a; }
.thumb-cur { box-shadow: 0 0 0 1px #2a2a2d, 0 0 0 3.500px #e8917e; }
.mini { width: 100%; height: 100%; border-radius: 6px; overflow: hidden; }
.mini ellipse { fill: #111; }
.mini-cover { font: 700 6.500px Inter, sans-serif; letter-spacing: .6px; fill: #11111c; }
.mini-h { font: 700 7px Inter, sans-serif; letter-spacing: .3px; fill: #111; }
.mini-b { font: 700 4px "Open Sans", sans-serif; fill: #554; }
.mini .bar { fill: #dcdcdf; }
.mini .cbar { fill: #235a85; }
.presence { position: absolute; right: -11px; top: -13px; width: 25px; height: 25px; border-radius: 50%; background: #4c7d0e; color: #f2f2f2; font-size: 13px; display: flex; align-items: center; justify-content: center; }

.vscroll { width: 23px; flex: none; position: relative; background: #0e0d10; border-right: 1px solid #3b3b3e; }
.arrow-up, .arrow-down { position: absolute; left: 4px; width: 0; height: 0; border-left: 6px solid transparent; border-right: 6px solid transparent; }
.arrow-up { top: 5px; border-bottom: 8px solid #9a999d; }
.arrow-down { bottom: 11px; border-top: 8px solid #9a999d; }
.vthumb { position: absolute; left: 4px; width: 11px; border-radius: 6px; background: #9a999d; }
.vt-left { top: 21px; height: 446px; }
.vt-right { top: 87px; height: 66px; background: #a3a2a6; }
.canvas { width: 1198px; flex: none; padding: 52px 0 0 15px; overflow: hidden; }
.slide { width: 1174px; height: 800px; background: #fff; position: relative; padding-top: 300px; }
.slide-title { margin: 0; font: 700 46px/60px Inter, sans-serif; letter-spacing: 4.600px; color: #0a0a0a; text-align: center; padding-right: 6px; white-space: nowrap; }
.slide-badge { position: absolute; left: 1067px; top: 32px; width: 26px; height: 26px; border-radius: 50%; background: #000; color: #fff; font-size: 10px; font-weight: 600; display: flex; align-items: center; justify-content: center; }
.v-right { margin-left: 0; width: 22px; }

/* copilot */
.copilot { width: 406px; flex: none; margin-left: 15px; position: relative; display: flex; flex-direction: column; }
.cp-head { height: 59px; flex: none; display: flex; align-items: center; padding: 0 5px 0 0; }
.cp-logo { margin-left: 0; }
.cp-title { margin-left: 7px; font-size: 26px; color: #f0f0f0; letter-spacing: -.3px; }
.cp-min { margin-left: 225px; }
.cp-close { margin-left: 25px; }
.cp-band { height: 5px; flex: none; background: #1f1e22; }
.cp-body { flex: 1; background: #2a2a2d; padding-top: 7px; overflow: hidden; }
.bubble { margin-left: 91px; width: 283px; height: 90px; background: #6f2012; border-radius: 0 0 8px 8px; padding: 1px 0 0 16px; font-size: 17.500px; line-height: 25px; letter-spacing: -.22px; color: #f3f3f3; white-space: nowrap; }
.answer { margin: 12px 0 0 19px; width: 356px; height: 255px; position: relative; border: 1px solid #343437; border-radius: 8px; }
.answer-list { margin: 0; padding: 33px 0 0 65px; font-size: 17.500px; line-height: 25px; letter-spacing: -.3px; color: #ececec; white-space: nowrap; }
.answer-list b { color: #fff; font-weight: 700; letter-spacing: -.1px; }
.answer-foot { position: absolute; left: -1px; bottom: 1px; width: 358px; height: 70px; border: 5px solid #7265f0; display: flex; align-items: center; padding-left: 13px; background: #2a2a2d; }
.ai-pill { width: 235px; height: 25px; background: #050505; border-radius: 6px; font-size: 13px; font-weight: 500; line-height: 24px; text-align: center; color: #b8b8b8; letter-spacing: -.3px; white-space: nowrap; margin-right: 33px; }
.thumb-ic { margin-right: 15px; }
.suggest { margin: 10px 0 0 26px; width: 357px; height: 57px; border: 1px solid #e0b48e; border-radius: 11px; padding: 7px 0 0 10px; font-size: 14.500px; line-height: 20px; letter-spacing: -.15px; font-weight: 500; color: #f2f2f2; white-space: nowrap; }
.answer + .suggest { margin-top: 18px; }
.refresh-row { display: flex; justify-content: flex-end; width: 383px; margin-top: 10px; }
.refresh { width: 39px; height: 34px; border: 1px solid #e0b48e; border-radius: 10px; background: transparent; display: flex; align-items: center; justify-content: center; padding: 0; }
.composer { margin: 5px 0 0 20px; width: 367px; height: 110px; border: 1px solid #5b5b5e; border-radius: 8px 8px 0 0; padding: 14px 0 0 11px; }
.composer-text { font-size: 17.500px; line-height: 26px; letter-spacing: -.4px; color: #8f8f92; white-space: nowrap; }
.composer-tools { display: flex; align-items: flex-start; margin-top: 24px; padding-left: 186px; }
.ct-b { margin-left: 21px; }
.ct-sep { width: 1px; height: 20px; background: #4d4d50; margin-left: 8px; }
.ct-c { margin-left: 18px; }
.ct-d { margin-left: 27px; }
.cp-track { position: absolute; right: 1px; top: 71px; width: 11px; height: 363px; background: #323235; border-radius: 5px; }
.cp-thumb { position: absolute; left: 1px; top: 176px; width: 9px; height: 157px; border-radius: 5px; background: #a3a2a6; }
```
